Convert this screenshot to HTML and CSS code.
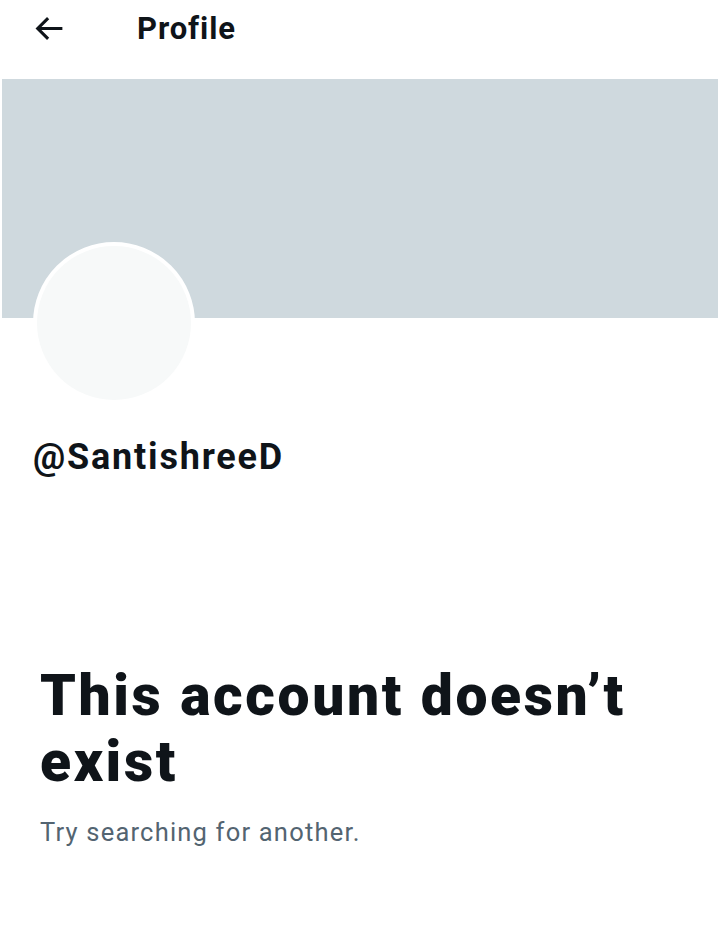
FILE: index.html
```html
<!DOCTYPE html>
<html>
<head>
<title>Profile</title>
<link rel="stylesheet" href="styles.css">
</head>
<body>
	<!-- top bar -->
	<div class="topBar">
		<span class="backBtn">
			<svg width="37" height="37" viewBox="0 0 24 24"><path d="M7.414 13l5.043 5.04-1.414 1.42L3.586 12l7.457-7.46 1.414 1.42L7.414 11H21v2H7.414z" fill="#0f1419"/></svg>
		</span>
		<span class="title">Profile</span>
	</div>
	<!-- banner + avatar -->
	<div class="banner"></div>
	<div class="avatarRow">
		<div class="avatar"></div>
	</div>
	<div class="handle">@SantishreeD</div>
	<!-- message -->
	<div class="message">
		<h1 class="headline">This account doesn’t exist</h1>
		<p class="hint">Try searching for another.</p>
	</div>
</body>
</html>
```
FILE: styles.css
```css
body {
	margin: 0;
	background: #fff;
	font-family: Roboto, "Liberation Sans", sans-serif;
	color: #0f1419;
}
.topBar {
	display: flex;
	align-items: center;
	height: 56px;
	padding-left: 30px;
	margin-bottom: 23px;
}
.backBtn {
	display: flex;
	width: 37px;
}
.title {
	margin-left: 70px;
	font-size: 31px;
	font-weight: 700;
	letter-spacing: 0.9px;
}
.banner {
	margin: 0 2px;
	height: 239px;
	background: #cfd9de;
}
.avatarRow {
	display: flow-root;
	height: 86px;
	padding-left: 33px;
}
.avatar {
	width: 154px;
	height: 154px;
	margin-top: -76px;
	border: 4px solid #fff;
	border-radius: 50%;
	background: #f7f9f9;
}
.handle {
	margin-top: 32px;
	padding-left: 33px;
	font-size: 36px;
	font-weight: 700;
	letter-spacing: 1.8px;
}
.message {
	padding: 0 40px;
	margin-top: 185px;
}
.headline {
	margin: 0;
	font-size: 57px;
	font-weight: 900;
	line-height: 66px;
	letter-spacing: 2.6px;
}
.hint {
	margin: 22px 0 0;
	font-size: 25.5px;
	color: #536471;
	letter-spacing: 1.2px;
}
```
